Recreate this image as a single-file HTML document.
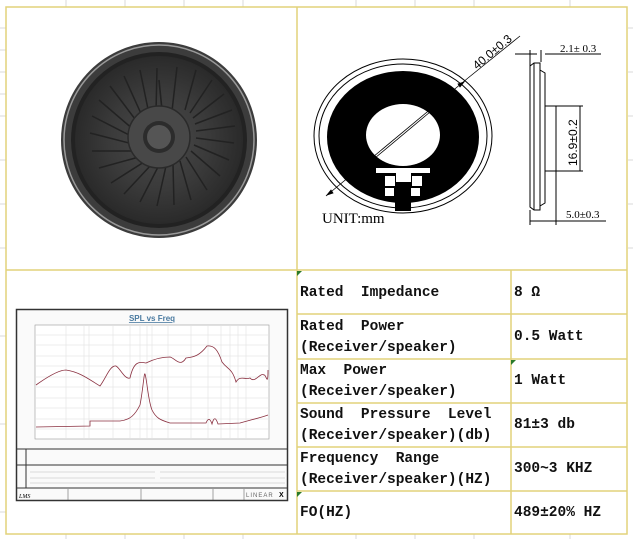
<!DOCTYPE html>
<html><head><meta charset="utf-8"><style>
body{margin:0;width:633px;height:539px;background:#fff;overflow:hidden;position:relative;font-family:"Liberation Mono","Noto Serif CJK SC",monospace;}
.t{position:absolute;font-size:14.5px;font-weight:bold;color:#111;line-height:21px;white-space:pre;}
</style></head><body>
<svg width="633" height="539" style="position:absolute;left:0;top:0">
<!-- faint excel grid -->
<g stroke="#d8d8d8" stroke-width="1">
<line x1="66" y1="0" x2="66" y2="7"/><line x1="125" y1="0" x2="125" y2="7"/><line x1="184" y1="0" x2="184" y2="7"/><line x1="243" y1="0" x2="243" y2="7"/><line x1="356" y1="0" x2="356" y2="7"/><line x1="415" y1="0" x2="415" y2="7"/><line x1="474" y1="0" x2="474" y2="7"/><line x1="570" y1="0" x2="570" y2="7"/>
<line x1="0" y1="28" x2="6" y2="28"/><line x1="0" y1="50" x2="6" y2="50"/><line x1="0" y1="72" x2="6" y2="72"/><line x1="0" y1="94" x2="6" y2="94"/><line x1="0" y1="116" x2="6" y2="116"/><line x1="0" y1="160" x2="6" y2="160"/><line x1="0" y1="204" x2="6" y2="204"/><line x1="0" y1="248" x2="6" y2="248"/><line x1="0" y1="336" x2="6" y2="336"/><line x1="0" y1="424" x2="6" y2="424"/><line x1="0" y1="512" x2="6" y2="512"/>
<line x1="628" y1="28" x2="633" y2="28"/><line x1="628" y1="72" x2="633" y2="72"/><line x1="628" y1="116" x2="633" y2="116"/><line x1="628" y1="160" x2="633" y2="160"/><line x1="628" y1="204" x2="633" y2="204"/><line x1="628" y1="248" x2="633" y2="248"/>
<line x1="66" y1="534" x2="66" y2="539"/><line x1="125" y1="534" x2="125" y2="539"/><line x1="184" y1="534" x2="184" y2="539"/><line x1="243" y1="534" x2="243" y2="539"/><line x1="356" y1="534" x2="356" y2="539"/><line x1="415" y1="534" x2="415" y2="539"/><line x1="474" y1="534" x2="474" y2="539"/><line x1="570" y1="534" x2="570" y2="539"/>
</g>
<!-- yellow table -->
<g stroke="#e2d27a" stroke-width="1.5" fill="none">
<rect x="6" y="7" width="621" height="527"/>
<line x1="297" y1="7" x2="297" y2="534"/>
<line x1="6" y1="270" x2="627" y2="270"/>
<line x1="297" y1="314" x2="627" y2="314"/>
<line x1="297" y1="359" x2="627" y2="359"/>
<line x1="297" y1="403" x2="627" y2="403"/>
<line x1="297" y1="447" x2="627" y2="447"/>
<line x1="297" y1="491" x2="627" y2="491"/>
<line x1="511" y1="270" x2="511" y2="534"/>
</g>
<g fill="#2a7a2a"><path d="M297 271l5 0-5 5z"/><path d="M511 360l5 0-5 5z"/><path d="M297 492l5 0-5 5z"/></g>
<!-- speaker photo -->
<defs><radialGradient id="cone" cx="50%" cy="50%" r="50%"><stop offset="0" stop-color="#4a4a4a"/><stop offset="0.6" stop-color="#3a3a3a"/><stop offset="1" stop-color="#2a2a2a"/></radialGradient></defs>
<circle cx="159" cy="140" r="98" fill="#3c3c3c"/>
<circle cx="159" cy="140" r="95" fill="none" stroke="#999" stroke-width="1.5"/>
<circle cx="159" cy="140" r="88" fill="#222"/>
<circle cx="159" cy="140" r="84" fill="url(#cone)"/>
<g stroke="#222" stroke-width="1.6" id="ribs">
<path d="M159 80 L165 140" transform="rotate(0 159 140)"/>
</g>
<g stroke="#262626" stroke-width="1.5">
<script></script>
</g>
<g stroke="#222" stroke-width="1.5" fill="none">
<path d="M196 70 L185 110"/><path d="M212 80 L190 113"/><path d="M224 94 L193 118"/><path d="M232 110 L195 124"/><path d="M235 126 L196 131"/><path d="M234 143 L196 138"/><path d="M229 160 L194 145"/><path d="M220 176 L191 151"/><path d="M207 190 L186 157"/><path d="M191 200 L180 161"/><path d="M174 205 L173 164"/><path d="M157 206 L166 166"/><path d="M140 202 L158 167"/><path d="M124 194 L151 165"/><path d="M111 183 L144 162"/><path d="M99 168 L139 157"/><path d="M92 151 L135 151"/><path d="M90 133 L133 144"/><path d="M92 116 L133 137"/><path d="M99 100 L134 130"/><path d="M110 86 L138 123"/><path d="M124 76 L143 118"/><path d="M140 70 L149 114"/><path d="M157 68 L156 112"/><path d="M177 67 L172 111"/>
</g>
<circle cx="159" cy="137" r="31" fill="#484848" stroke="#2a2a2a" stroke-width="1.5"/>
<circle cx="159" cy="137" r="16" fill="#2c2c2c"/>
<circle cx="159" cy="137" r="12" fill="#555"/>
<!-- drawing front view -->
<g stroke="#000" stroke-width="1" fill="none">
<ellipse cx="403" cy="136" rx="89" ry="77"/>
<ellipse cx="403" cy="136" rx="84" ry="72"/>
</g>
<ellipse cx="403" cy="137" rx="76" ry="66" fill="#000"/>
<ellipse cx="403" cy="135" rx="37" ry="31" fill="#fff"/>
<path d="M376 168 L430 168 L430 173 L376 173Z" fill="#fff"/>
<rect x="385" y="176" width="10" height="10" fill="#fff"/><rect x="412" y="176" width="10" height="10" fill="#fff"/>
<rect x="385" y="188" width="9" height="8" fill="#fff"/><rect x="410" y="188" width="10" height="8" fill="#fff"/>
<rect x="396" y="173" width="15" height="10" fill="#fff"/>
<rect x="395" y="182" width="16" height="29" fill="#000"/>
<g stroke="#000" stroke-width="0.8" fill="none">
<line x1="375" y1="158" x2="430" y2="112"/>
<line x1="326" y1="196" x2="468" y2="78"/>
<line x1="468" y1="78" x2="520" y2="36"/>
<path d="M327 195l6-2-2-3z" fill="#000"/><path d="M464 82l-6 2 2 3z" fill="#000"/>
</g>
<text x="0" y="0" transform="translate(477 70) rotate(-40)" font-family="Liberation Sans" font-size="12">40.0±0.3</text>
<text x="322" y="223" font-family="Liberation Serif" font-size="15">UNIT:mm</text>
<!-- side view -->
<g stroke="#000" stroke-width="1" fill="none">
<path d="M530 66 L534 63 L540 63 L540 210 L534 210 L530 207Z"/>
<line x1="534" y1="63" x2="534" y2="210"/>
<path d="M540 70 L545 73 L545 203 L540 206"/>
<rect x="545" y="106" width="11" height="65"/>
<line x1="515" y1="54" x2="537" y2="54"/><line x1="545" y1="54" x2="601" y2="54"/>
<line x1="530" y1="50" x2="530" y2="66"/><line x1="541" y1="50" x2="541" y2="62"/>
<line x1="556" y1="106" x2="583" y2="106"/><line x1="556" y1="171" x2="583" y2="171"/>
<line x1="580" y1="106" x2="580" y2="171"/>
<line x1="530" y1="210" x2="530" y2="225"/><line x1="556" y1="171" x2="556" y2="225"/>
<line x1="530" y1="221" x2="606" y2="221"/>
</g>
<text x="560" y="52" font-family="Liberation Serif" font-size="11">2.1± 0.3</text>
<text x="566" y="218" font-family="Liberation Serif" font-size="11">5.0±0.3</text>
<text transform="translate(577 166) rotate(-90)" font-family="Liberation Sans" font-size="12">16.9±0.2</text>
<!-- chart -->
<rect x="16.5" y="309.5" width="271" height="191" fill="#fafafa" stroke="#333" stroke-width="1.5"/>
<text x="152" y="321" text-anchor="middle" font-family="Liberation Sans" font-size="8" font-weight="bold" fill="#4a7aa0" text-decoration="underline">SPL vs Freq</text>
<rect x="35" y="325" width="234" height="114" fill="#fff" stroke="#999" stroke-width="0.6"/>
<g stroke="#ddd" stroke-width="0.5">
<line x1="35" y1="335" x2="269" y2="335"/><line x1="35" y1="345" x2="269" y2="345"/><line x1="35" y1="356" x2="269" y2="356"/><line x1="35" y1="366" x2="269" y2="366"/><line x1="35" y1="377" x2="269" y2="377"/><line x1="35" y1="387" x2="269" y2="387"/><line x1="35" y1="398" x2="269" y2="398"/><line x1="35" y1="408" x2="269" y2="408"/><line x1="35" y1="419" x2="269" y2="419"/><line x1="35" y1="429" x2="269" y2="429"/>
<line x1="66" y1="325" x2="66" y2="439"/><line x1="84" y1="325" x2="84" y2="439"/><line x1="89" y1="325" x2="89" y2="439"/><line x1="113" y1="325" x2="113" y2="439"/><line x1="130" y1="325" x2="130" y2="439"/><line x1="140" y1="325" x2="140" y2="439"/><line x1="147" y1="325" x2="147" y2="439"/><line x1="152" y1="325" x2="152" y2="439"/><line x1="168" y1="325" x2="168" y2="439"/><line x1="191" y1="325" x2="191" y2="439"/><line x1="208" y1="325" x2="208" y2="439"/><line x1="221" y1="325" x2="221" y2="439"/><line x1="230" y1="325" x2="230" y2="439"/><line x1="238" y1="325" x2="238" y2="439"/><line x1="246" y1="325" x2="246" y2="439"/>
</g>
<path d="M36 385 C50 375 60 370 66 370 C80 372 90 380 100 386 C106 378 110 365 116 366 C120 368 125 380 130 378 C134 360 140 362 146 363 C152 360 160 357 170 357 C175 358 180 368 186 358 C195 357 200 355 207 346 C214 345 218 350 222 362 C228 370 232 368 236 382 C240 375 245 380 250 378 C255 384 260 372 264 375 C266 374 268 388 268 370" fill="none" stroke="#8a3040" stroke-width="0.8"/>
<path d="M36 427 L90 426 L90 421 L120 421 C130 420 135 415 140 405 C143 390 144 372 145 374 C147 380 148 400 152 410 C156 418 160 420 170 423 L206 423 C208 418 210 418 212 424 C214 416 216 418 218 424 L240 423 C250 420 260 418 268 415" fill="none" stroke="#8a3040" stroke-width="0.8"/>
<g stroke="#333" stroke-width="1"><line x1="17" y1="449" x2="287" y2="449"/><line x1="17" y1="465" x2="287" y2="465"/><line x1="17" y1="488" x2="287" y2="488"/><line x1="26" y1="449" x2="26" y2="488"/></g>
<g stroke="#bbb" stroke-width="0.5"><line x1="30" y1="472" x2="155" y2="472"/><line x1="160" y1="472" x2="285" y2="472"/><line x1="30" y1="478" x2="155" y2="478"/><line x1="160" y1="478" x2="285" y2="478"/><line x1="30" y1="483" x2="285" y2="483"/></g>
<g stroke="#666" stroke-width="0.6"><line x1="68" y1="489" x2="68" y2="500"/><line x1="141" y1="489" x2="141" y2="500"/><line x1="213" y1="489" x2="213" y2="500"/><line x1="244" y1="489" x2="244" y2="500"/></g>
<text x="19" y="498" font-family="Liberation Serif" font-size="6" font-style="italic">LMS</text>
<text x="246" y="497" font-family="Liberation Sans" font-size="6" fill="#666" letter-spacing="1">LINEAR</text>
<text x="279" y="497" font-family="Liberation Sans" font-size="7" font-weight="bold">X</text>
</svg>
<div class="t" style="left:300px;top:283px">Rated  Impedance</div>
<div class="t" style="left:300px;top:317px">Rated  Power
(Receiver/speaker)</div>
<div class="t" style="left:300px;top:361px">Max  Power
(Receiver/speaker)</div>
<div class="t" style="left:300px;top:405px">Sound  Pressure  Level
(Receiver/speaker)(db)</div>
<div class="t" style="left:300px;top:449px">Frequency  Range
(Receiver/speaker)(HZ)</div>
<div class="t" style="left:300px;top:503px">FO(HZ)</div>
<div class="t" style="left:514px;top:283px">8 Ω</div>
<div class="t" style="left:514px;top:327px">0.5 Watt</div>
<div class="t" style="left:514px;top:371px">1 Watt</div>
<div class="t" style="left:514px;top:415px">81±3 db</div>
<div class="t" style="left:514px;top:459px">300~3 KHZ</div>
<div class="t" style="left:514px;top:503px">489±20% HZ</div>
</body></html>
